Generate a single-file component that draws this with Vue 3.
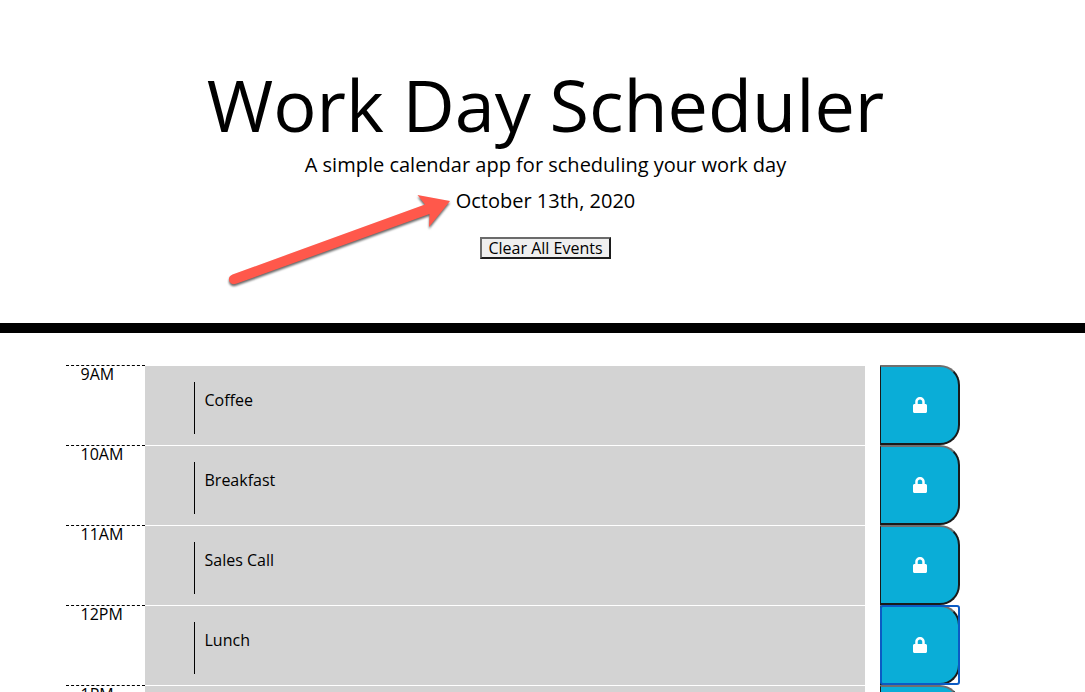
<script setup>
import { ref } from 'vue'

const blocks = ref([
  { hour: '9AM', text: 'Coffee' },
  { hour: '10AM', text: 'Breakfast' },
  { hour: '11AM', text: 'Sales Call' },
  { hour: '12PM', text: 'Lunch', active: true },
  { hour: '1PM', text: '' },
])

function clearAll() {
  blocks.value.forEach((block) => { block.text = '' })
}
</script>

<template>
  <div class="page">
    <header class="header">
      <h1 class="title">Work Day Scheduler</h1>
      <p class="lead">A simple calendar app for scheduling your work day</p>
      <p class="lead">October 13th, 2020</p>
      <button class="clear" type="button" @click="clearAll">Clear All Events</button>
      <svg class="arrow" viewBox="0 0 240 110" aria-hidden="true">
        <path d="M12.500 94.500 L205 24.500 L197.500 15 L230 21 L209 47 L209.500 34 L16 103.800 C9 106 6 97 12.500 94.500Z" fill="#ff584b" />
      </svg>
    </header>
    <main class="container">
      <section v-for="block in blocks" :key="block.hour" class="row">
        <label class="hour" :for="'event-' + block.hour">{{ block.hour }}</label>
        <div class="event">
          <textarea :id="'event-' + block.hour" v-model="block.text" class="description"></textarea>
        </div>
        <button class="save" :class="{ active: block.active }" type="button" :aria-label="'Save ' + block.hour">
          <svg class="lock" viewBox="0 0 448 512" aria-hidden="true">
            <path fill="currentColor" d="M400 224h-24v-72C376 68.200 307.800 0 224 0S72 68.200 72 152v72H48c-26.500 0-48 21.500-48 48v192c0 26.500 21.500 48 48 48h352c26.500 0 48-21.500 48-48V272c0-26.500-21.500-48-48-48zm-104 0H152v-72c0-39.700 32.300-72 72-72s72 32.300 72 72v72z" />
          </svg>
        </button>
      </section>
    </main>
  </div>
</template>

<style>
html {
  scrollbar-width: none;
}
body {
  margin: 0;
  background: #fff;
}
</style>

<style scoped>
.page {
  font-family: "Open Sans", "Noto Sans", sans-serif;
  font-size: 16px;
  line-height: 24px;
  color: #000;
}
.header {
  position: relative;
  display: flex;
  flex-direction: column;
  align-items: center;
  padding: 61px 0 64px 6px;
  border-bottom: 10px solid #000;
  text-align: center;
}
.title {
  margin: 0 0 3px;
  font-size: 72px;
  font-weight: 400;
  line-height: 86px;
}
.lead {
  margin: 0 0 6px;
  font-size: 20px;
  line-height: 30px;
}
.clear {
  margin-top: 15px;
  padding: 0 6px;
  border: 2px solid #1c1c1c;
  border-top-color: #6b6b6b;
  border-left-color: #6b6b6b;
  border-radius: 0;
  background: #efefef;
  color: #000;
  font-family: inherit;
  font-size: 16px;
  line-height: 18px;
}
.arrow {
  position: absolute;
  top: 180px;
  right: calc(50% + 83px);
  width: 240px;
  height: 110px;
  overflow: visible;
  filter: drop-shadow(0 2px 1px rgba(0, 0, 0, 0.6));
}
.container {
  box-sizing: border-box;
  max-width: 960px;
  margin: 0 auto;
  padding: 32px 63px 0 3px;
}
.row {
  display: grid;
  grid-template-columns: 79px minmax(0, 1fr) 80px;
  height: 80px;
}
.hour {
  padding-left: 15px;
  border-top: 1px dashed #000;
  line-height: 16px;
}
.event {
  display: flex;
  margin-right: 15px;
  padding: 16px 49px 11px;
  border-top: 1px solid #fff;
  background: #d3d3d3;
}
.description {
  box-sizing: border-box;
  flex: 1;
  height: 52px;
  padding: 6px 10px;
  border: 0;
  border-left: 1px solid #000;
  outline: 0;
  background: transparent;
  color: #000;
  font-family: inherit;
  font-size: 16px;
  line-height: 24px;
  resize: none;
}
.save {
  position: relative;
  display: flex;
  align-items: center;
  justify-content: center;
  padding: 0 0 0 1px;
  border: 2px solid #1a1a1a;
  border-top-color: #6f6f6f;
  border-left-width: 1px;
  border-radius: 0 20px 20px 0;
  background: #0aadd7;
  color: #fff;
}
.save.active::after {
  content: "";
  position: absolute;
  inset: -2px -2px -2px -1px;
  border: 2px solid #0b5bc4;
  border-radius: 3px;
}
.lock {
  width: 14px;
  height: 16px;
}
</style>
